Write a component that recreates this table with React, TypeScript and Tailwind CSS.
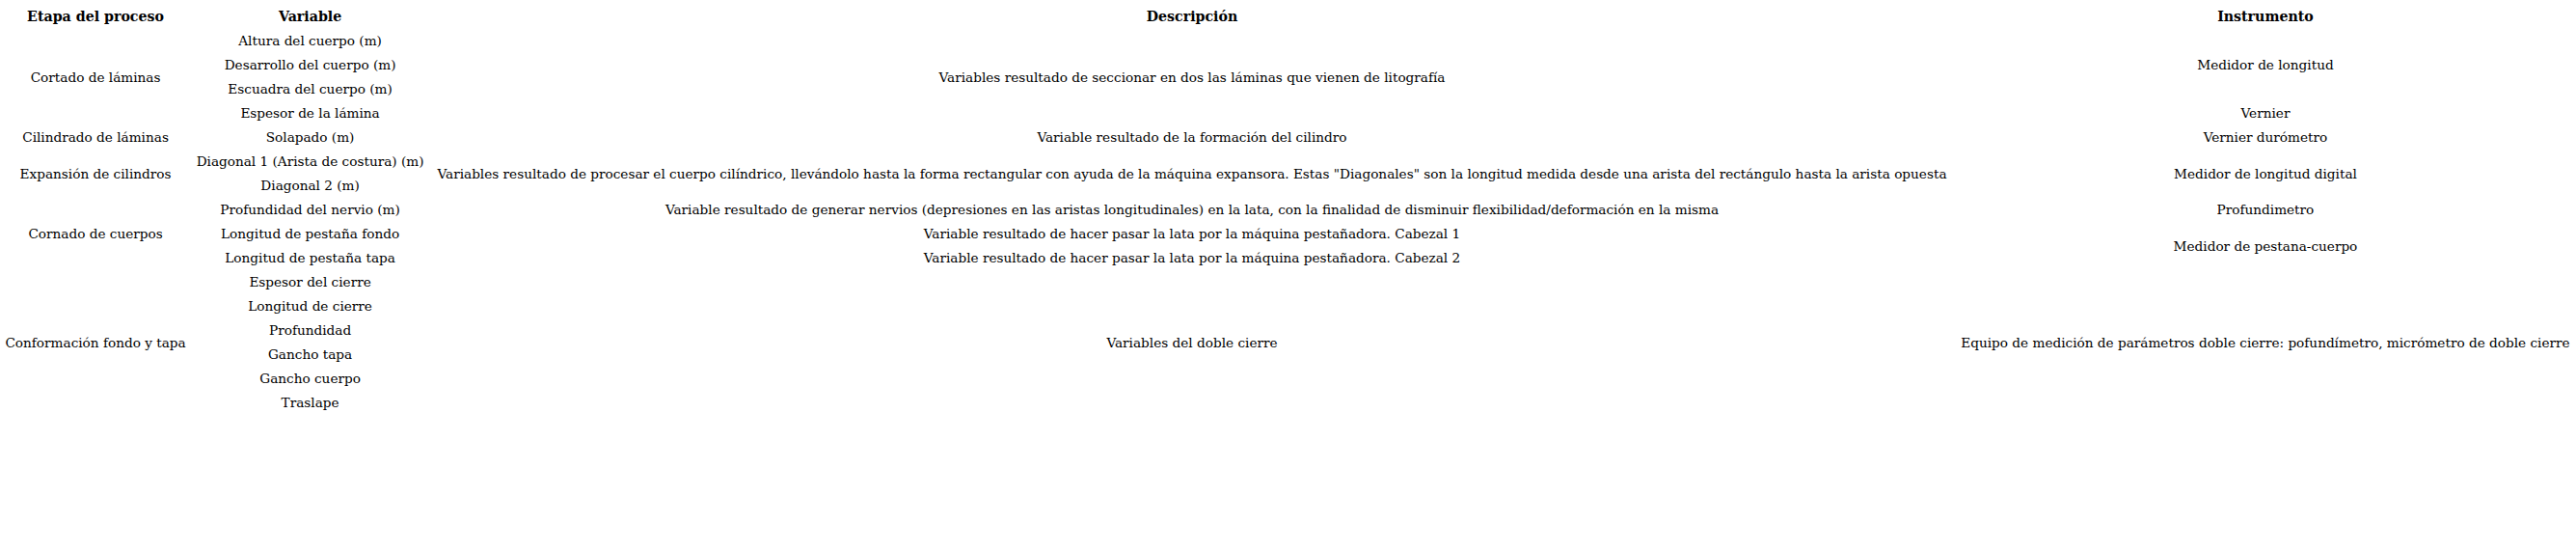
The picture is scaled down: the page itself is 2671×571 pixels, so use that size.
import React from "react";

type Cell = { text: string; rowSpan?: number };
type Row = { stage?: Cell; variable: string; desc?: Cell; inst?: Cell };

const rows: Row[] = [
  {
    stage: { text: "Cortado de láminas", rowSpan: 4 },
    variable: "Altura del cuerpo (m)",
    desc: { text: "Variables resultado de seccionar en dos las láminas que vienen de litografía", rowSpan: 4 },
    inst: { text: "Medidor de longitud", rowSpan: 3 },
  },
  { variable: "Desarrollo del cuerpo (m)" },
  { variable: "Escuadra del cuerpo (m)" },
  { variable: "Espesor de la lámina", inst: { text: "Vernier" } },
  {
    stage: { text: "Cilindrado de láminas" },
    variable: "Solapado (m)",
    desc: { text: "Variable resultado de la formación del cilindro" },
    inst: { text: "Vernier durómetro" },
  },
  {
    stage: { text: "Expansión de cilindros", rowSpan: 2 },
    variable: "Diagonal 1 (Arista de costura) (m)",
    desc: {
      text: 'Variables resultado de procesar el cuerpo cilíndrico, llevándolo hasta la forma rectangular con ayuda de la máquina expansora. Estas "Diagonales" son la longitud medida desde una arista del rectángulo hasta la arista opuesta',
      rowSpan: 2,
    },
    inst: { text: "Medidor de longitud digital", rowSpan: 2 },
  },
  { variable: "Diagonal 2 (m)" },
  {
    stage: { text: "Cornado de cuerpos", rowSpan: 3 },
    variable: "Profundidad del nervio (m)",
    desc: {
      text: "Variable resultado de generar nervios (depresiones en las aristas longitudinales) en la lata, con la finalidad de disminuir flexibilidad/deformación en la misma",
    },
    inst: { text: "Profundimetro" },
  },
  {
    variable: "Longitud de pestaña fondo",
    desc: { text: "Variable resultado de hacer pasar la lata por la máquina pestañadora. Cabezal 1" },
    inst: { text: "Medidor de pestana-cuerpo", rowSpan: 2 },
  },
  {
    variable: "Longitud de pestaña tapa",
    desc: { text: "Variable resultado de hacer pasar la lata por la máquina pestañadora. Cabezal 2" },
  },
  {
    stage: { text: "Conformación fondo y tapa", rowSpan: 6 },
    variable: "Espesor del cierre",
    desc: { text: "Variables del doble cierre", rowSpan: 6 },
    inst: {
      text: "Equipo de medición de parámetros doble cierre: pofundímetro, micrómetro de doble cierre",
      rowSpan: 6,
    },
  },
  { variable: "Longitud de cierre" },
  { variable: "Profundidad" },
  { variable: "Gancho tapa" },
  { variable: "Gancho cuerpo" },
  { variable: "Traslape" },
];

const td = "px-[5px] py-[5px] text-center align-middle whitespace-nowrap leading-[15px]";
const th = "px-[5px] py-[5px] text-center align-middle whitespace-nowrap leading-[15px] font-bold text-[14.2px]";

export default function App() {
  return (
    <div
      className="w-[2671px] h-[571px] bg-white text-black text-[13.64px] pt-[5px]"
      style={{ fontFamily: '"DejaVu Serif", serif' }}
    >
      <table className="w-full border-collapse">
        <thead>
          <tr>
            <th className={th}>Etapa del proceso</th>
            <th className={th}>Variable</th>
            <th className={th}>Descripción</th>
            <th className={th}>Instrumento</th>
          </tr>
        </thead>
        <tbody>
          {rows.map((r, i) => (
            <tr key={i}>
              {r.stage && (
                <td className={td} rowSpan={r.stage.rowSpan ?? 1}>
                  {r.stage.text}
                </td>
              )}
              <td className={td}>{r.variable}</td>
              {r.desc && (
                <td className={td} rowSpan={r.desc.rowSpan ?? 1}>
                  {r.desc.text}
                </td>
              )}
              {r.inst && (
                <td className={td} rowSpan={r.inst.rowSpan ?? 1}>
                  {r.inst.text}
                </td>
              )}
            </tr>
          ))}
        </tbody>
      </table>
    </div>
  );
}
